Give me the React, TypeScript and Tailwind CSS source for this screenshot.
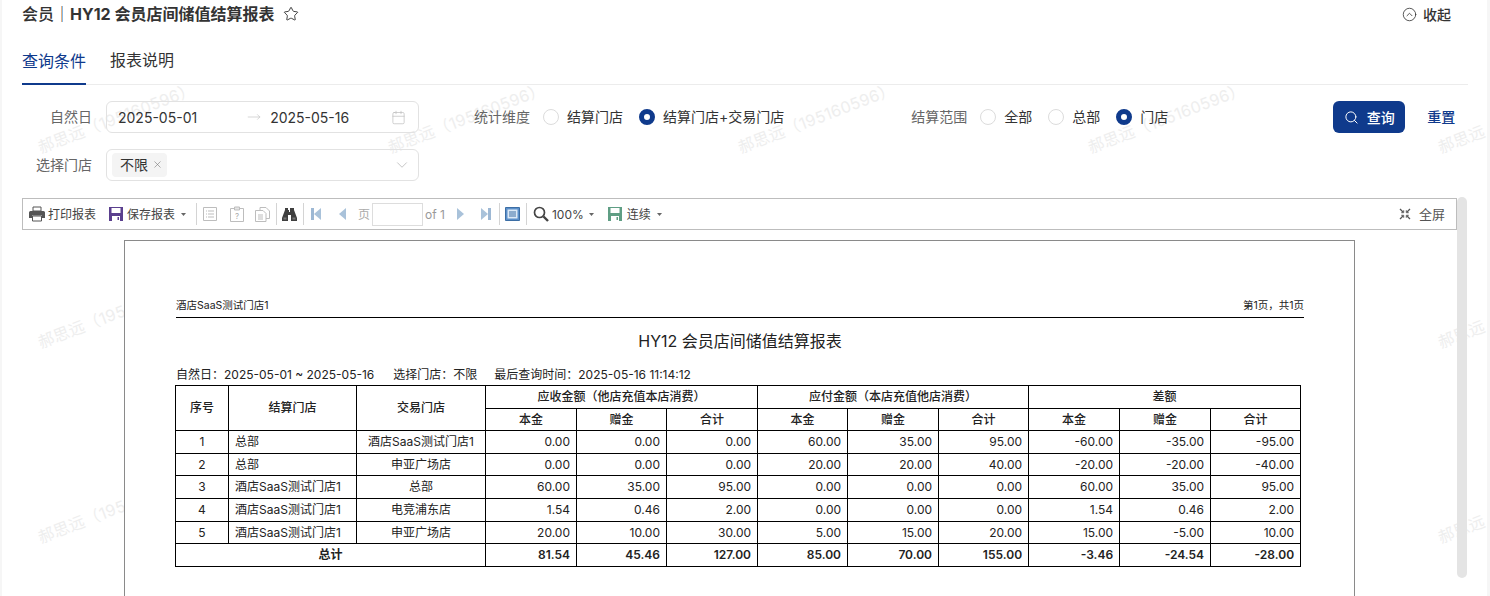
import React from "react";
import { Star, CircleChevronUp, Calendar, Search, ChevronDown, X, MoveRight } from "lucide-react";

const wmX = [33, 383, 733, 1083, 1433];
const wmY = [117, 312, 507];

function Radio({ on, label, cls }: { on?: boolean; label: string; cls: string }) {
  return (
    <label className={"flex items-center " + cls}>
      <span className={on ? "w-4 h-4 rounded-full bg-white border-[5px] border-[#0f3a8c]" : "w-4 h-4 rounded-full border border-[#dcdcdc]"} />
      <span className="ml-2 pb-px text-[14px] text-[#333]">{label}</span>
    </label>
  );
}

const Caret = ({ cls = "" }: { cls?: string }) => (
  <svg width="5" height="3" viewBox="0 0 5 3" className={cls}><path d="M0 0h5L2.5 3z" fill="#666" /></svg>
);
const Sep = ({ cls = "" }: { cls?: string }) => <span className={"w-px h-[22px] bg-[#d4d4d4] " + cls} />;

const Printer = () => (
  <svg width="16" height="16" viewBox="0 0 16 16"><path d="M4 1h8v4H4z" fill="#fff" stroke="#555" /><path d="M1.5 5h13a1.5 1.5 0 0 1 1.5 1.500V12h-3V9.500H3V12H0V6.500A1.500 1.500 0 0 1 1.500 5z" fill="#555" /><path d="M3.500 10h9v5h-9z" fill="#fff" stroke="#555" /></svg>
);
const Floppy = ({ c }: { c: string }) => (
  <svg width="16" height="16" viewBox="0 0 16 16"><path d="M1 1h14v14H1z" fill={c} /><path d="M3.500 2h9v5h-9z" fill="#fff" /><path d="M4 10h8v5H4z" fill="#fff" /><path d="M9.500 11h1.500v3H9.500z" fill={c} /></svg>
);
const Doc = () => (
  <svg width="14" height="14" viewBox="0 0 14 14" fill="none" stroke="#bdbdbd"><path d="M.5.500h13v13H.5z" /><path d="M3 4h1M5 4h6M3 7h1M5 7h6M3 10h1M5 10h6" /></svg>
);
const Clip = () => (
  <svg width="14" height="16" viewBox="0 0 14 16" fill="none" stroke="#bdbdbd"><path d="M4 2.500H.5v13h13v-13H10" /><path d="M4.500 1h5v3h-5z" fill="#e5e5e5" /><text x="7" y="12.500" fontSize="8" textAnchor="middle" fill="#aaa" stroke="none">?</text></svg>
);
const Copy = () => (
  <svg width="15" height="15" viewBox="0 0 15 15" fill="none" stroke="#bdbdbd"><path d="M5 3V.500h6l3.500 3.500v7.500H11" /><path d="M.5 3.500H8l3 3v8H.5z" fill="#fff" /><path d="M3 8h5M3 10h5M3 12h5" /></svg>
);
const Binoculars = () => (
  <svg width="15" height="14" viewBox="0 0 15 14"><path d="M3 1h3v2h1v2h1V3h0V1h4v2l3 8v3H9V8H6v6H0v-3l3-8z" fill="#3f3f3f" /><path d="M1.500 10.500h3v2h-3zM10.500 10.500h3v2h-3z" fill="#777" /></svg>
);
const Nav = ({ dir, bar }: { dir: "l" | "r"; bar?: boolean }) => (
  <svg width={bar ? 10 : 7} height="12" viewBox={bar ? "0 0 10 12" : "0 0 7 12"}>
    {dir === "l" ? (
      bar ? <><path d="M0 0h3v12H0z" fill="#9db8d4" /><path d="M10 0v12L3 6z" fill="#a9c2da" /></> : <path d="M7 0v12L0 6z" fill="#a9c2da" />
    ) : bar ? <><path d="M7 0h3v12H7z" fill="#9db8d4" /><path d="M0 0v12l7-6z" fill="#a9c2da" /></> : <path d="M0 0v12l7-6z" fill="#a9c2da" />}
  </svg>
);
const PageView = () => (
  <svg width="15" height="14" viewBox="0 0 15 14"><path d="M.5.500h14v13H.5z" fill="#5b8fc9" stroke="#3c6ea5" /><path d="M2.500 2.500h10v9h-10z" fill="#dce9f6" /><path d="M4 5h7M4 7h7M4 9h7" stroke="#3c6ea5" /></svg>
);
const Magnifier = () => (
  <svg width="16" height="16" viewBox="0 0 16 16" fill="none" stroke="#444"><circle cx="6.500" cy="6.500" r="5" strokeWidth="1.700" /><path d="M10.500 10.500 15 15" strokeWidth="2.400" /></svg>
);
const Expand = () => (
  <svg width="12" height="12" viewBox="0 0 12 12" fill="none" stroke="#555" strokeWidth="1.300"><path d="M1 1l3 3M11 1L8 4M1 11l3-3M11 11L8 8" /><path d="M4.700 2.300v2.400H2.300M7.300 2.300v2.400h2.400M4.700 9.700V7.300H2.300M7.300 9.700V7.300h2.400" strokeWidth="1" /></svg>
);

const rows = [
  ["1", "总部", "酒店SaaS测试门店1", "0.00", "0.00", "0.00", "60.00", "35.00", "95.00", "-60.00", "-35.00", "-95.00"],
  ["2", "总部", "申亚广场店", "0.00", "0.00", "0.00", "20.00", "20.00", "40.00", "-20.00", "-20.00", "-40.00"],
  ["3", "酒店SaaS测试门店1", "总部", "60.00", "35.00", "95.00", "0.00", "0.00", "0.00", "60.00", "35.00", "95.00"],
  ["4", "酒店SaaS测试门店1", "电竞浦东店", "1.54", "0.46", "2.00", "0.00", "0.00", "0.00", "1.54", "0.46", "2.00"],
  ["5", "酒店SaaS测试门店1", "申亚广场店", "20.00", "10.00", "30.00", "5.00", "15.00", "20.00", "15.00", "-5.00", "10.00"],
];
const rowH = ["h-[23px]", "h-[22px]", "h-[23px]", "h-[23px]", "h-[22px]"];
const totals = ["81.54", "45.46", "127.00", "85.00", "70.00", "155.00", "-3.46", "-24.54", "-28.00"];
const widths = ["w-[53px]", "w-[128px]", "w-[129px]", "w-[91px]", "w-[90px]", "w-[91px]", "w-[90px]", "w-[91px]", "w-[90px]", "w-[91px]", "w-[91px]", "w-[90px]"];
const cell = "border border-black p-0 ";

export default function App() {
  return (
    <div className="relative w-[1490px] h-[596px] overflow-hidden bg-white flex font-['Inter','Noto_Sans_CJK_SC',sans-serif] text-[#333]">
      <div className="absolute inset-0 overflow-hidden">
        {wmY.flatMap((y) =>
          wmX.map((x) => (
            <span
              key={x + "-" + y}
              className="absolute w-[172px] h-6 leading-6 text-[16px] tracking-[0.3px] whitespace-nowrap text-[#eeeeee] -rotate-[21deg]"
              style={{ left: x, top: y - 12 }}
            >
              郝思远（195160596）
            </span>
          ))
        )}
      </div>
      <div className="relative w-[2px] bg-[#f6f6f6]" />
      <main className="relative flex-1 pl-5 pr-[19px]">
        <header className="h-7 flex items-center">
          <h1 className="text-[16px] leading-7 font-medium text-[#333]">
            会员｜<span className="font-bold">HY12 会员店间储值结算报表</span>
          </h1>
          <Star size={16} strokeWidth={1.4} className="ml-[9px] text-[#333]" />
          <div className="ml-auto mr-[17px] flex items-center gap-[6px] text-[14px] font-medium text-[#333]">
            <CircleChevronUp size={15} strokeWidth={1.3} />
            <span>收起</span>
          </div>
        </header>

        <nav className="h-[57px] flex items-end gap-6 border-b border-[#ececec]">
          <div className="h-[43px] -mb-px border-b-2 border-[#0f3a8c] text-[16px] leading-[22px] text-[#0f3a8c] pt-2">查询条件</div>
          <div className="h-[43px] text-[16px] leading-[22px] text-[#333] pt-2">报表说明</div>
        </nav>

        <section className="pt-4 flex items-start">
          <div className="flex flex-col gap-4">
            <div className="flex items-center h-8">
              <span className="w-[70px] pb-px text-right text-[14px] text-[#666]">自然日</span>
              <div className="ml-[14px] w-[313px] h-8 rounded-md border border-[#e2e2e2] flex items-center pl-[11px] pr-3 text-[14px] text-[#333]">
                <span>2025-05-01</span>
                <MoveRight size={14} strokeWidth={1} className="ml-[50px] text-[#bbb]" />
                <span className="ml-[9px]">2025-05-16</span>
                <Calendar size={15} strokeWidth={1.1} className="ml-auto text-[#bbb]" />
              </div>
            </div>
            <div className="flex items-center h-8">
              <span className="w-[70px] pb-px text-right text-[14px] text-[#666]">选择门店</span>
              <div className="ml-[14px] w-[313px] h-8 rounded-md border border-[#e2e2e2] flex items-center pl-[5px] pr-[7px]">
                <span className="h-6 w-[55px] rounded-sm bg-[#f4f4f4] flex items-center pl-2 pb-px text-[14px] text-[#333]">
                  不限
                  <X size={11} strokeWidth={1.3} className="ml-[4px] text-[#777]" />
                </span>
                <ChevronDown size={18} strokeWidth={0.9} className="ml-auto text-[#aaa]" />
              </div>
            </div>
          </div>

          <div className="flex items-center h-8 flex-1">
            <span className="ml-[55px] pb-px text-[14px] text-[#666]">统计维度</span>
            <Radio label="结算门店" cls="ml-[13px]" />
            <Radio on label="结算门店+交易门店" cls="ml-4" />
            <span className="ml-[127px] pb-px text-[14px] text-[#666]">结算范围</span>
            <Radio label="全部" cls="ml-[13px]" />
            <Radio label="总部" cls="ml-4" />
            <Radio on label="门店" cls="ml-4" />
            <button className="ml-[165px] w-[72px] h-8 rounded-md bg-[#0f3a8c] text-white text-[14px] font-medium flex items-center justify-center gap-2">
              <Search size={15} strokeWidth={1.6} />
              <span>查询</span>
            </button>
            <span className="ml-[22px] pb-px text-[14px] font-medium text-[#0f3a8c]">重置</span>
          </div>
        </section>

        <section className="relative mt-[17px] w-[1445px]">
          <div className="absolute right-0 -top-px w-[10px] h-[381px] rounded-md bg-[#e4e4e4]" />
          <div className="relative w-[1435px] h-8 bg-white border border-[#bdbdbd] flex items-center text-[12px] text-[#444] whitespace-nowrap">
            <span className="ml-[6px]"><Printer /></span>
            <span className="ml-[3px] pt-[2px]">打印报表</span>
            <span className="ml-3"><Floppy c="#5a3f8e" /></span>
            <span className="ml-[3px] pt-[2px]">保存报表</span>
            <Caret cls="ml-[6px]" />
            <Sep cls="ml-[10px]" />
            <span className="ml-[6px]"><Doc /></span>
            <span className="ml-[13px]"><Clip /></span>
            <span className="ml-[11px]"><Copy /></span>
            <Sep cls="ml-[6px]" />
            <span className="ml-[5px]"><Binoculars /></span>
            <Sep cls="ml-[6px]" />
            <span className="ml-[7px]"><Nav dir="l" bar /></span>
            <span className="ml-[18px]"><Nav dir="l" /></span>
            <span className="ml-3 pt-[2px] text-[#aaa]">页</span>
            <span className="ml-[2px] w-[51px] h-[23px] border border-[#ddd] bg-white" />
            <span className="ml-[2px] pt-[2px] text-[#999]">of 1</span>
            <span className="ml-3"><Nav dir="r" /></span>
            <span className="ml-[17px]"><Nav dir="r" bar /></span>
            <Sep cls="ml-2" />
            <span className="ml-[5px]"><PageView /></span>
            <Sep cls="ml-[6px]" />
            <span className="ml-[6px]"><Magnifier /></span>
            <span className="ml-[3px] pt-[2px]">100%</span>
            <Caret cls="ml-[5px]" />
            <span className="ml-[13px]"><Floppy c="#5f9e84" /></span>
            <span className="ml-1 pt-[2px]">连续</span>
            <Caret cls="ml-[6px]" />
            <span className="ml-auto"><Expand /></span>
            <span className="ml-2 mr-[11px] pt-[2px] text-[13px] text-[#555]">全屏</span>
          </div>

          <div className="relative ml-[102px] mt-[10px] w-[1231px] h-[400px] bg-white border border-b-0 border-[#8a8a8a] pl-[51px] pr-[50px] text-black">
            <div className="mt-[55px] h-[22px] flex items-start justify-between border-b border-black text-[10.500px] leading-5 text-[#222]">
              <span>酒店SaaS测试门店1</span>
              <span>第1页，共1页</span>
            </div>
            <h2 className="mt-[12px] h-[22px] text-center text-[16px] leading-[22px] font-normal text-[#222]">HY12 会员店间储值结算报表</h2>
            <p className="mt-[13px] h-[20px] text-[12px] leading-[20px] text-[#222] whitespace-nowrap">
              <span>自然日：2025-05-01 ~ 2025-05-16</span>
              <span className="ml-[19px]">选择门店：不限</span>
              <span className="ml-[17px]">最后查询时间：2025-05-16 11:14:12</span>
            </p>
            <table className="-ml-px w-[1126px] table-fixed border-collapse text-[12px] leading-none text-[#222]">
              <colgroup>
                {widths.map((w, i) => <col key={i} className={w} />)}
              </colgroup>
              <thead className="font-medium">
                <tr className="h-[23px]">
                  <th rowSpan={2} className={cell + "font-medium"}>序号</th>
                  <th rowSpan={2} className={cell + "font-medium"}>结算门店</th>
                  <th rowSpan={2} className={cell + "font-medium"}>交易门店</th>
                  <th colSpan={3} className={cell + "font-medium"}>应收金额（他店充值本店消费）</th>
                  <th colSpan={3} className={cell + "font-medium"}>应付金额（本店充值他店消费）</th>
                  <th colSpan={3} className={cell + "font-medium"}>差额</th>
                </tr>
                <tr className="h-[22px]">
                  {["本金", "赠金", "合计", "本金", "赠金", "合计", "本金", "赠金", "合计"].map((t, i) => (
                    <th key={i} className={cell + "font-medium"}>{t}</th>
                  ))}
                </tr>
              </thead>
              <tbody>
                {rows.map((r, ri) => (
                  <tr key={ri} className={rowH[ri]}>
                    {r.map((v, i) => (
                      <td
                        key={i}
                        className={
                          cell +
                          (i === 0 || i === 2 ? "text-center" : i === 1 ? "text-left pl-[6px]" : "text-right pr-[6px]")
                        }
                      >
                        {v}
                      </td>
                    ))}
                  </tr>
                ))}
                <tr className="h-[23px] font-medium">
                  <td colSpan={3} className={cell + "text-center font-bold"}>总计</td>
                  {totals.map((v, i) => (
                    <td key={i} className={cell + "text-right pr-[6px] font-semibold"}>{v}</td>
                  ))}
                </tr>
              </tbody>
            </table>
          </div>
        </section>
      </main>
      <div className="relative w-[3px] bg-[#f6f6f6]" />
    </div>
  );
}
